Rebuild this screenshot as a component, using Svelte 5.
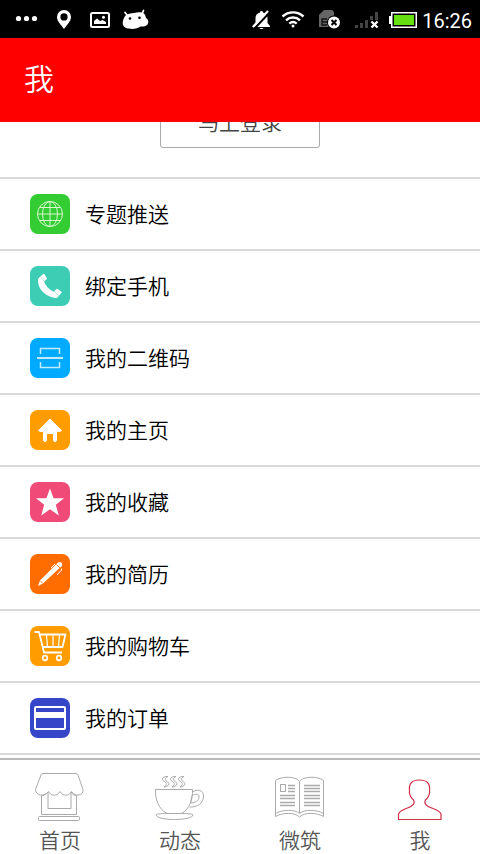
<script>
  const rows = [
    { icon: 'globe', label: '专题推送', color: '#33cc33' },
    { icon: 'phone', label: '绑定手机', color: '#3dcdb5' },
    { icon: 'scan', label: '我的二维码', color: '#00aaff' },
    { icon: 'home', label: '我的主页', color: '#ff9c00' },
    { icon: 'star', label: '我的收藏', color: '#f04a78' },
    { icon: 'pen', label: '我的简历', color: '#ff6c00' },
    { icon: 'cart', label: '我的购物车', color: '#ff9c00' },
    { icon: 'card', label: '我的订单', color: '#3746c8' }
  ];
  const tabs = [
    { icon: 'shop', label: '首页' },
    { icon: 'cup', label: '动态' },
    { icon: 'book', label: '微筑' },
    { icon: 'user', label: '我', active: true }
  ];
</script>

<div class="page">
  <div class="status">
    <div class="group">
      <svg viewBox="10 0 36 38" fill="#fff"><circle cx="18.5" cy="18.5" r="2.6" /><circle cx="26.5" cy="18.5" r="2.6" /><circle cx="34.5" cy="18.5" r="2.6" /></svg>
      <svg viewBox="46 0 36 38"><path fill="#fff" fill-rule="evenodd" d="M64 10a7 7 0 0 0-7 7c0 4.500 4 7.500 7 12 3-4.500 7-7.500 7-12a7 7 0 0 0-7-7zm0 3.300a3.600 3.600 0 1 1 0 7.200 3.600 3.600 0 0 1 0-7.200z" /></svg>
      <svg viewBox="82 0 36 38"><rect x="91" y="13" width="18" height="14" rx="1.500" fill="none" stroke="#fff" stroke-width="2" /><path fill="#fff" d="M94 24v-3l3-2.500 3 2.500 2.500-1 3.500 2v2z" /><circle cx="103.500" cy="17.300" r="1.500" fill="#fff" /></svg>
      <svg viewBox="118 0 36 38"><path stroke="#fff" stroke-width="1.800" stroke-linecap="round" d="m125 12.500 2.500 3M143.500 10.500 142 14" /><path fill="#fff" d="M125.500 15.500c2-1.500 5-2.500 8.500-2.500 3-1 7-1.500 10 .5 1.500 1.500 1.500 3 2 4.500 2.500 1.500 3 4.500 1.500 6.500-2 2-4.500 2.300-7 2-3 2.300-8 3-11.500 2-4 0-6.500-2.500-6.300-6 .3-3 1.300-5 2.800-7z" /><circle cx="130" cy="18.500" r="1.300" /><circle cx="139.500" cy="17.800" r="1.300" /></svg>
    </div>
    <div class="group">
      <svg viewBox="240 0 36 38"><path fill="#fff" d="M253 27v-1l2.500-3v-5c0-3 2-5 4.500-5.500 0-2 3-2 3 0 2.500.5 4.500 2.500 4.500 5.500v5l2.500 3v1zM259.500 28h4c-.5 1.300-3.500 1.300-4 0z" /><path d="M254.500 28.500 270.500 11.500" stroke="#000" stroke-width="2" /><path d="M252.800 27 268 11" stroke="#fff" stroke-width="2.200" /></svg>
      <svg viewBox="276 0 36 38" fill="none" stroke="#fff" stroke-width="2.400"><path d="M282.500 16.500c6-5.500 15-5.500 21 0M286 20.300c4-3.700 10-3.700 14 0M289.300 23.700c2.200-2 5.200-2 7.400 0" /><circle cx="293" cy="26" r="1.500" fill="#fff" stroke="none" /></svg>
      <svg viewBox="312 0 36 38"><path fill="#666" d="M319 15l5-5h8l2 2v15h-15z" /><path d="M327 19h-5v6h5M322 22h5" fill="none" stroke="#111" stroke-width="1.300" /><circle cx="334" cy="22.500" r="7" /><circle cx="334" cy="22.500" r="6" fill="#fff" /><path d="m331.500 20 5 5m0-5-5 5" stroke="#000" stroke-width="2" /></svg>
      <svg viewBox="348 0 36 38"><path fill="#444" d="M355 25h3v3h-3zM360 23h3v5h-3zM365 20h3v8h-3zM370 16h3v12h-3zM375 12h3v16h-3z" /><path d="M370 20h9v9h-9z" /><path d="m371.500 21.500 6 6m0-6-6 6" stroke="#fff" stroke-width="2.300" /></svg>
      <svg viewBox="384 0 36 38"><path fill="#fff" d="M391 12h26v16h-26v-4h-2v-8h2z" /><path d="M392.500 13.500h23v13h-23z" /><path fill="#66e010" d="M394 15h20v10h-20z" /></svg>
      <time>16:26</time>
    </div>
  </div>

  <header><h1>我</h1></header>

  <main>
    <div class="login"><button type="button">马上登录</button></div>
    <ul>
      {#each rows as row}
        <li>
          <a href="#{row.icon}">
            <svg class="badge" viewBox="0 0 40 40" style="background: {row.color}" fill="none" stroke="#fff" aria-hidden="true">
              {#if row.icon === 'globe'}
                <g stroke="#d8f8d0"><circle cx="20" cy="20" r="12.500" /><ellipse cx="20" cy="20" rx="7.500" ry="12.500" /><path d="M20 7.500v25M7.500 20h25M9.500 13.500h21M9.500 26.500h21" /></g>
              {:else if row.icon === 'phone'}
                <path fill="#fff" stroke="none" d="M9.300 11.500 13.200 8c.5-.4 1-.2 1.300.3l2.300 3.700c.3.500.2 1-.2 1.300L14.200 15.500c1.500 4.500 4.500 8 9.500 10.300l2.500-2.600c.5-.5 1-.5 1.500-.2l3.500 2.400c.7.500.7 1 .2 1.500l-4 4.500c-.4.500-1 .6-2 .5C16 31 7.500 23 8 14c0-1 .5-1.800 1.300-2.500z" /><path stroke="#8ee3d5" stroke-width=".7" d="m10.500 10.500 4 5M24.500 25l4 5" />
              {:else if row.icon === 'scan'}
                <g stroke="#c2eaff" stroke-width="1.500"><path d="M10.500 16v-5.500h19V16M10.500 24v5.500h19V24" /><path stroke-width="2" d="M7 20h26" /></g>
              {:else if row.icon === 'home'}
                <path fill="#fff" stroke="#fff" stroke-linejoin="round" d="M20 9 8.500 20.500 10 21.500h3.500V30q0 1.500 1.500 1.500t1.500-1.500v-6.500h7V30q0 1.500 1.500 1.500t1.500-1.500v-8.500H30l1.500-1z" />
              {:else if row.icon === 'star'}
                <path fill="#fff" stroke="none" d="m20 6.500 3.600 9.700H34l-8.200 6.500 3 10.800-8.800-6.300-8.800 6.300 3-10.800L6 16.200h10.400z" />
              {:else if row.icon === 'pen'}
                <path fill="#fff" stroke="none" d="m8 32 2-5.500L25 11.500 27.500 9c1.500-1.200 3-1.300 4-.2s1 2.500-.2 4L28.500 15 13 29.500z" /><path stroke="#ff6c00" stroke-width=".9" d="m26.500 10.500 3.500 3.500M10.500 27l2.500 2.500" /><path stroke-width="1" d="m21 14 4-4M31.500 14.500v1.500l-4.500 5" />
              {:else if row.icon === 'cart'}
                <path stroke-width="1.800" stroke-linejoin="round" d="M4.500 6H9l5 20.500h18M10 8.500h25.500L32.500 21H13" /><path d="m16.500 8.500 1 12.500M23 8.500V21M29.500 8.500l-1 12.500" stroke-width="1.200" /><circle cx="15" cy="32" r="2.300" stroke-width="1.700" /><circle cx="29" cy="32" r="2.300" stroke-width="1.700" />
              {:else}
                <rect x="5" y="9" width="30" height="22" rx="1" stroke-width="2" /><path fill="#fff" stroke="none" d="M5 14h30v6H5z" />
              {/if}
            </svg>
            <span>{row.label}</span>
          </a>
        </li>
      {/each}
    </ul>
  </main>

  <nav>
    {#each tabs as tab}
      <a href="#{tab.icon}" aria-current={tab.active ? 'page' : undefined}>
        <svg viewBox="0 0 56 56" fill="none" stroke="#aaa" aria-hidden="true">
          {#if tab.icon === 'shop'}
            <path d="M11 5.500h33q1.500 0 2 1.500l5 14.500c1 6-8 8-11.500 2-3 5-8.500 5-11.500 0-3 5-8.500 5-11.500 0-4 6-13 4-13-2L9 7q.5-1.500 2-1.500z" /><path d="M9.500 27.500v19h35v-19M9.500 28c2.500-.5 5-2 6.500-4v16.500h23V24c1 2 3 3.500 5.500 4" /><rect x="6.500" y="48.500" width="41" height="4" rx="1" />
          {:else if tab.icon === 'cup'}
            <path d="M3.500 21.500h37c.5 10-3 19.500-11 24H15C6.500 41 3 31 3.500 21.500zM40.500 24c5-3.500 11-2 11 4 0 7-6 11.500-14 11M40 27.500c3.500-2 7-2 7 1.500s-3.500 6-8.500 6zM15 45.500c-7 0-11 .5-11 1.500 1 6 36 6 37 0 0-1-4-1.500-11.500-1.500" />
            <path d="M16 8.500c-6-.5-7 3.500-3.500 5 3 1.500 2 4-.5 5.500 5.500-.5 6-4 3-5.500-2.500-1.500-2-4 1-5zM24 8.500c-6-.5-7 3.500-3.500 5 3 1.500 2 4-.5 5.500 5.500-.5 6-4 3-5.500-2.500-1.500-2-4 1-5zM32 8.500c-6-.5-7 3.500-3.500 5 3 1.500 2 4-.5 5.500 5.500-.5 6-4 3-5.500-2.500-1.500-2-4 1-5z" />
          {:else if tab.icon === 'book'}
            <path d="M27.500 13.500C24 8 9 8 3.500 12.500v36c7-4 19-4.500 24 .5 5-5 17-4.500 24-.5v-36C46 8 31 8 27.500 13.500zM27.500 13.500v31.500M3.500 45.500c7-4 19-4.500 24 0 5-4.500 17-4 24 0" /><rect x="8.500" y="16.500" width="5" height="7" /><path d="M16 17.500h7M16 20.500h7M16 23.500h7M8 27.500h15M8 30.500h15M8 34.500h15M8 37.500h15M32 17.500h16M32 20.500h16M32 23.500h16M32 27.500h16M32 30.500h16M32 34.500h16M32 37.500h16" stroke-width="1.300" />
          {:else}
            <path stroke="#d03048" stroke-width="1.200" d="M6.500 51.500v-5.500c2-5 9-5 13-8 3-2 3.500-3.500 2-6-2-1.500-5-6-4-9-1-8 3-11 10-11s11 3 10 11c1 3-2 7.500-4 9-1.500 2.500-1 4 2 6 4 3 11.500 3 13.500 8v5.500z" />
          {/if}
        </svg>
        <span>{tab.label}</span>
      </a>
    {/each}
  </nav>
</div>

<style>
  :global(body) { margin: 0; background: #fff; }
  .page {
    display: flex;
    flex-direction: column;
    height: 100vh;
    overflow: hidden;
    font-family: "Noto Sans CJK SC", sans-serif;
    font-weight: 350;
    color: #000;
  }
  .status {
    flex: none;
    display: flex;
    justify-content: space-between;
    height: 38px;
    padding: 0 8px 0 10px;
    background: #000;
  }
  .group { display: flex; }
  .group svg { width: 36px; height: 38px; }
  time {
    width: 52px;
    font: 20px/42px Roboto, sans-serif;
    text-align: right;
    color: #fff;
  }
  header {
    flex: none;
    display: flex;
    align-items: center;
    height: 78px;
    padding: 0 24px 6px;
    background: #f00;
  }
  h1 { margin: 0; font-size: 30px; line-height: 40px; font-weight: 350; color: #fff; }
  main { flex: 1; min-height: 0; overflow: hidden; }
  .login {
    display: flex;
    justify-content: center;
    align-items: flex-end;
    box-sizing: border-box;
    height: 55px;
    padding-bottom: 29px;
    overflow: hidden;
  }
  button {
    flex: none;
    width: 160px;
    height: 50px;
    padding: 0 0 4px;
    border: 1px solid #aaa;
    border-radius: 3px;
    background: #fff;
    font: 350 21px/24px "Noto Sans CJK SC", sans-serif;
    color: #444;
  }
  ul { margin: 0; padding: 0; list-style: none; border-top: 2px solid #d9d9d9; }
  li { border-bottom: 2px solid #d9d9d9; }
  li a {
    display: flex;
    align-items: center;
    gap: 15px;
    height: 70px;
    padding: 0 30px;
    font-size: 21px;
    line-height: 32px;
    color: inherit;
    text-decoration: none;
  }
  li span { padding-bottom: 2px; }
  .badge { flex: none; width: 40px; height: 40px; border-radius: 8px; }
  nav { flex: none; display: flex; height: 94px; border-top: 2px solid #b8b8b8; background: #fff; }
  nav a {
    flex: 1;
    display: flex;
    flex-direction: column;
    align-items: center;
    padding-top: 8px;
    font-size: 21px;
    line-height: 30px;
    color: #555;
    text-decoration: none;
  }
  nav svg { flex: none; width: 56px; height: 56px; }
</style>
